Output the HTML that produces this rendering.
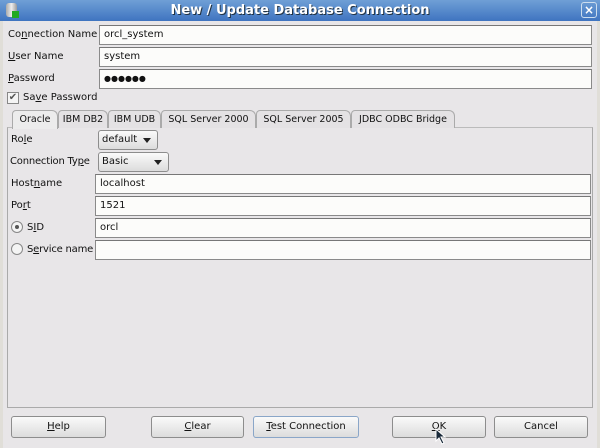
<!DOCTYPE html>
<html><head><style>
*{box-sizing:border-box;margin:0;padding:0}
body{width:600px;height:448px;overflow:hidden;background:#e8e6e8;font-family:"DejaVu Sans","Liberation Sans",sans-serif;font-size:10px;color:#111;position:relative}
.a{position:absolute;white-space:nowrap}
.title{left:0;top:0;width:600px;height:21px;background:linear-gradient(#6f9fd6,#3f74c0);color:#fff;font-weight:bold;font-size:13px;text-align:center;line-height:21px;text-shadow:1px 1px 0 #234}
.frame{left:0;top:21px;width:600px;height:427px;border-left:3px solid #e0ded8;border-right:3px solid #e0ded8}
.in{background:#fcfcfa;border:1px solid #8a8a8a;border-top-color:#777;padding-left:4px;line-height:17px;height:20px}
.lbl{line-height:18px}
.btn{height:22px;border:1px solid #8d8d8d;border-radius:3px;background:linear-gradient(#fafafa,#dcdcdc);text-align:center;line-height:20px}
.sel{height:20px;border:1px solid #8d8d8d;border-radius:3px;background:linear-gradient(#fafafa,#dcdcdc);padding-left:3px;line-height:18px}
.sel:after{content:"";position:absolute;right:6px;top:7px;border:4px solid transparent;border-top:5px solid #222}
.tab{top:110px;height:18px;line-height:17px;border:1px solid #aaa;border-bottom:none;border-radius:4px 6px 0 0;background:#e4e2e4;text-align:center;font-size:9.5px}
u{text-decoration:underline}
</style></head><body>
<div class="a title">New / Update Database Connection</div>
<div class="a" style="left:6px;top:3px;width:11px;height:14px;background:linear-gradient(90deg,#aaa,#eee,#999);border-radius:3px"></div>
<div class="a" style="left:12px;top:11px;width:7px;height:7px;background:#2a2"></div>
<div class="a" style="left:581px;top:2px;width:16px;height:16px;border:1px solid #cde;border-radius:3px;color:#fff;font-weight:bold;font-size:12px;text-align:center;line-height:14px">×</div>
<div class="a frame"></div>

<div class="a lbl" style="left:8px;top:26px">Co<u>n</u>nection Name</div>
<div class="a in" style="left:99px;top:25px;width:493px">orcl_system</div>
<div class="a lbl" style="left:8px;top:48px"><u>U</u>ser Name</div>
<div class="a in" style="left:99px;top:47px;width:493px">system</div>
<div class="a lbl" style="left:8px;top:70px"><u>P</u>assword</div>
<div class="a in" style="left:99px;top:69px;width:493px;font-size:8px;letter-spacing:0">●●●●●●</div>
<div class="a" style="left:7px;top:92px;width:12px;height:12px;border:1px solid #888;background:#f4f4f4;font-size:10px;line-height:10px;text-align:center;color:#555">✔</div>
<div class="a lbl" style="left:23px;top:89px">Sa<u>v</u>e Password</div>

<div class="a" style="left:7px;top:127px;width:586px;height:281px;border:1px solid #aaa;border-top-color:#bbb"></div>
<div class="a tab" style="left:12px;width:46px;background:#ececec;height:19px;z-index:2">Oracle</div>
<div class="a tab" style="left:58px;width:50px">IBM DB2</div>
<div class="a tab" style="left:108px;width:53px">IBM UDB</div>
<div class="a tab" style="left:161px;width:95px">SQL Server 2000</div>
<div class="a tab" style="left:256px;width:95px">SQL Server 2005</div>
<div class="a tab" style="left:351px;width:104px">JDBC ODBC Bridge</div>

<div class="a lbl" style="left:11px;top:131px">Ro<u>l</u>e</div>
<div class="a sel" style="left:98px;top:130px;width:60px">default</div>
<div class="a lbl" style="left:10px;top:153px;letter-spacing:-0.2px">Connection Ty<u>p</u>e</div>
<div class="a sel" style="left:98px;top:152px;width:71px">Basic</div>
<div class="a lbl" style="left:11px;top:175px">Host<u>n</u>ame</div>
<div class="a in" style="left:95px;top:174px;width:496px">localhost</div>
<div class="a lbl" style="left:11px;top:197px">Po<u>r</u>t</div>
<div class="a in" style="left:95px;top:196px;width:496px">1521</div>
<div class="a" style="left:11px;top:221px;width:12px;height:12px;border:1px solid #888;border-radius:50%;background:#f4f4f4"></div>
<div class="a" style="left:15px;top:225px;width:4px;height:4px;border-radius:50%;background:#555"></div>
<div class="a lbl" style="left:27px;top:219px">S<u>I</u>D</div>
<div class="a in" style="left:95px;top:218px;width:496px">orcl</div>
<div class="a" style="left:11px;top:243px;width:12px;height:12px;border:1px solid #888;border-radius:50%;background:#f4f4f4"></div>
<div class="a lbl" style="left:27px;top:241px;letter-spacing:-0.2px">S<u>e</u>rvice name</div>
<div class="a in" style="left:95px;top:240px;width:496px"></div>

<div class="a btn" style="left:11px;top:416px;width:95px"><u>H</u>elp</div>
<div class="a btn" style="left:151px;top:416px;width:93px"><u>C</u>lear</div>
<div class="a btn" style="left:253px;top:416px;width:106px;border-color:#8aa6c8"><u>T</u>est Connection</div>
<div class="a btn" style="left:392px;top:416px;width:94px"><u>O</u>K</div>
<div class="a btn" style="left:494px;top:416px;width:94px">Cancel</div>
<svg class="a" style="left:435px;top:428px" width="12" height="18"><path d="M1 1 L1 13 L4 10 L7 16 L9 15 L6 9 L10 9 Z" fill="#1a2a3a" stroke="#fff" stroke-width="1"/></svg>
</body></html>
